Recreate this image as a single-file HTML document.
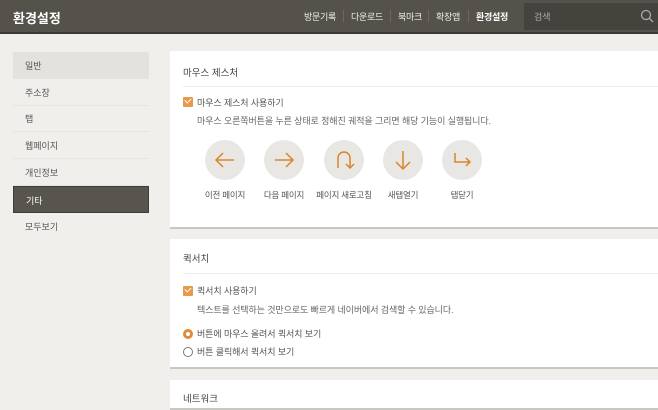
<!DOCTYPE html>
<html><head><meta charset="utf-8"><style>
*{margin:0;padding:0;box-sizing:border-box}
body{width:658px;height:406px;overflow:hidden;background:#f0efec;font-family:"Liberation Sans","Noto Sans CJK KR",sans-serif;font-size:9.5px;color:#444;position:relative}
.hd{position:absolute;left:0;top:0;width:658px;height:34px;background:#54524b;border-bottom:2px solid #3a3934}
.ttl{position:absolute;left:13px;top:8px;color:#fff;font-size:13px;font-weight:bold}
.nav{position:absolute;top:10px;color:#eee;font-size:9px;letter-spacing:-0.3px}
.sep{position:absolute;top:10px;width:1px;height:12px;background:#6a6860}
.srch{position:absolute;left:524px;top:3px;width:134px;height:27px;background:#45433d}
.srch span{position:absolute;left:10px;top:7px;color:#aaa;font-size:9px}
.side{position:absolute;left:13px;width:136px;height:27px;padding:7px 0 0 12px;font-size:9px;color:#555;border-bottom:1px solid #e6e5e1}
.pn{position:absolute;left:170px;width:488px;background:#fff;border-bottom:2px solid #c8c7c3}
.pt{position:absolute;left:13px;font-size:9.5px;color:#444}
.ln{position:absolute;left:13px;right:0;height:1px;background:#eee}
.cb{position:absolute;left:13px;width:10px;height:10px;background:#e89a4c;border-radius:1px}
.cb:after{content:"";position:absolute;left:2px;top:1px;width:5px;height:3px;border-left:1.5px solid #fff;border-bottom:1.5px solid #fff;transform:rotate(-45deg)}
.t{position:absolute;font-size:9px;color:#555;white-space:nowrap;letter-spacing:-0.1px}
.c{position:absolute;top:89px;width:40px;height:40px;border-radius:50%;background:#e8e7e4}
.lb{position:absolute;top:138px;width:80px;text-align:center;font-size:8.5px;color:#555;letter-spacing:-0.2px}
</style></head><body>
<div class="hd">
<div class="ttl">환경설정</div>
<div class="nav" style="left:304px">방문기록</div><div class="sep" style="left:343px"></div>
<div class="nav" style="left:351px">다운로드</div><div class="sep" style="left:390px"></div>
<div class="nav" style="left:398px">북마크</div><div class="sep" style="left:428px"></div>
<div class="nav" style="left:436px">확장앱</div><div class="sep" style="left:468px"></div>
<div class="nav" style="left:476px;color:#fff;font-weight:bold">환경설정</div>
<div class="srch"><span>검색</span>
<svg style="position:absolute;right:4px;top:6px" width="14" height="14" viewBox="0 0 14 14"><circle cx="6" cy="6" r="4.5" fill="none" stroke="#aaa" stroke-width="1.3"/><path d="M9.5 9.5L13 13" stroke="#aaa" stroke-width="1.3"/></svg></div>
</div>
<div class="side" style="top:52px;background:#e3e2dd;border:none">일반</div>
<div class="side" style="top:79px">주소장</div>
<div class="side" style="top:105px">탭</div>
<div class="side" style="top:132px">웹페이지</div>
<div class="side" style="top:159px">개인정보</div>
<div class="side" style="top:186px;background:#57554d;color:#fff;border:1px solid #3f3e39">기타</div>
<div class="side" style="top:213px;border:none">모두보기</div>

<div class="pn" style="top:51px;height:178px">
<div class="pt" style="top:14px">마우스 제스처</div>
<div class="ln" style="top:35px"></div>
<div class="cb" style="top:46px"></div>
<div class="t" style="left:27px;top:45px">마우스 제스처 사용하기</div>
<div class="t" style="left:27px;top:63px;color:#666">마우스 오른쪽버튼을 누른 상태로 정해진 궤적을 그리면 해당 기능이 실행됩니다.</div>
<div class="c" style="left:35px"><svg width="40" height="40"><path d="M11 20H29M18 13l-7 7 7 7" fill="none" stroke="#d9852f" stroke-width="1.5"/></svg></div>
<div class="c" style="left:94px"><svg width="40" height="40"><path d="M11 20H29M22 13l7 7-7 7" fill="none" stroke="#d9852f" stroke-width="1.5"/></svg></div>
<div class="c" style="left:154px"><svg width="40" height="40"><path d="M14 28V18a6 6 0 0 1 12 0v9M22 24l4 4 4-4" fill="none" stroke="#d9852f" stroke-width="1.5"/></svg></div>
<div class="c" style="left:213px"><svg width="40" height="40"><path d="M20 11V29M13 22l7 7 7-7" fill="none" stroke="#d9852f" stroke-width="1.5"/></svg></div>
<div class="c" style="left:272px"><svg width="40" height="40"><path d="M13 13v9h15M24 18l4 4-4 4" fill="none" stroke="#d9852f" stroke-width="1.5"/></svg></div>
<div class="lb" style="left:15px">이전 페이지</div>
<div class="lb" style="left:74px">다음 페이지</div>
<div class="lb" style="left:134px">페이지 새로고침</div>
<div class="lb" style="left:193px">새탭열기</div>
<div class="lb" style="left:252px">탭닫기</div>
</div>

<div class="pn" style="top:239px;height:130px">
<div class="pt" style="top:12px">퀵서치</div>
<div class="ln" style="top:34px"></div>
<div class="cb" style="top:47px"></div>
<div class="t" style="left:27px;top:45px">퀵서치 사용하기</div>
<div class="t" style="left:27px;top:64px;color:#666">텍스트를 선택하는 것만으로도 빠르게 네이버에서 검색할 수 있습니다.</div>
<div style="position:absolute;left:13px;top:90px;width:10px;height:10px;border-radius:50%;border:3px solid #e08a3a;background:#fff"></div>
<div class="t" style="left:27px;top:88px">버튼에 마우스 올려서 퀵서치 보기</div>
<div style="position:absolute;left:13px;top:108px;width:10px;height:10px;border-radius:50%;border:1px solid #777;background:#fff"></div>
<div class="t" style="left:27px;top:106px">버튼 클릭해서 퀵서치 보기</div>
</div>

<div class="pn" style="top:380px;height:30px">
<div class="pt" style="top:11px">네트워크</div>
</div>
</body></html>
